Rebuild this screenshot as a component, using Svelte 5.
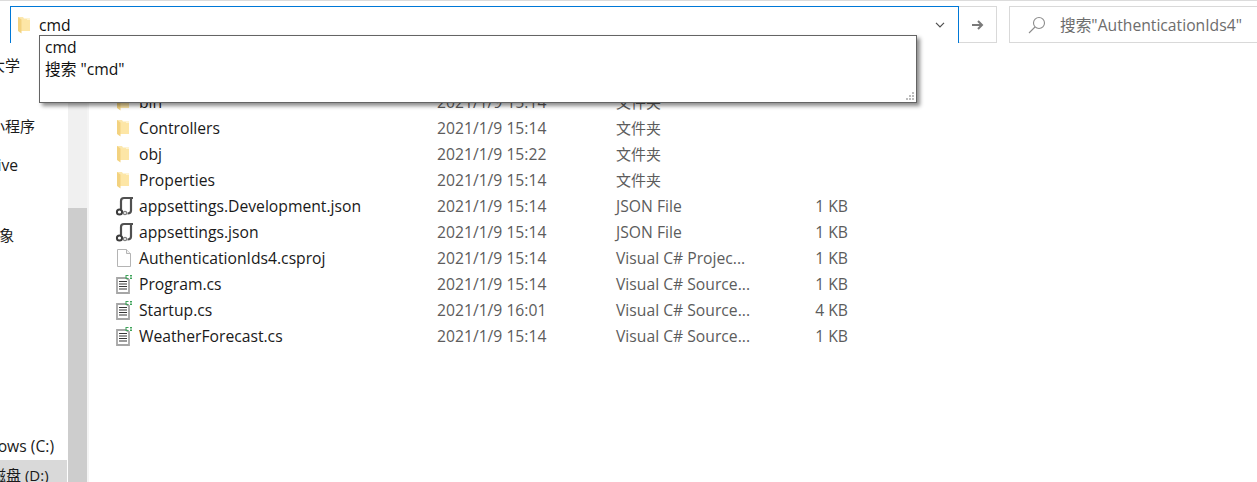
<script>
  const navItems = [
    { label: '北京大学', top: 11, left: -40, cn: true },
    { label: '微信小程序', top: 39, left: -40, cn: true },
    { label: 'OneDrive', top: 17, left: -51, cn: false },
    { label: '3D 对象', top: 48, left: -39, cn: true },
    { label: 'Windows (C:)', top: 189, left: -40, cn: false },
  ]

  const files = [
    { name: 'bin', date: '2021/1/9 15:14', type: '文件夹', size: '', icon: 'folder' },
    { name: 'Controllers', date: '2021/1/9 15:14', type: '文件夹', size: '', icon: 'folder' },
    { name: 'obj', date: '2021/1/9 15:22', type: '文件夹', size: '', icon: 'folder' },
    { name: 'Properties', date: '2021/1/9 15:14', type: '文件夹', size: '', icon: 'folder' },
    { name: 'appsettings.Development.json', date: '2021/1/9 15:14', type: 'JSON File', size: '1 KB', icon: 'json' },
    { name: 'appsettings.json', date: '2021/1/9 15:14', type: 'JSON File', size: '1 KB', icon: 'json' },
    { name: 'AuthenticationIds4.csproj', date: '2021/1/9 15:14', type: 'Visual C# Projec...', size: '1 KB', icon: 'file' },
    { name: 'Program.cs', date: '2021/1/9 15:14', type: 'Visual C# Source...', size: '1 KB', icon: 'cs' },
    { name: 'Startup.cs', date: '2021/1/9 16:01', type: 'Visual C# Source...', size: '4 KB', icon: 'cs' },
    { name: 'WeatherForecast.cs', date: '2021/1/9 15:14', type: 'Visual C# Source...', size: '1 KB', icon: 'cs' },
  ]
</script>

{#snippet folderIcon()}
  <svg class="icon" viewBox="-1 0 14 18" width="14" height="18">
    <path d="M1 1h5l1 1.500h6V15H1z" fill="#fbe7ae"/>
    <path d="M4.500 3.500H13V15H4.500z" fill="#fde6a6"/>
    <path d="M1 1l3.500 2.500V17.500L1 15z" fill="#f3d27f"/>
    <path d="M10 2.500h3V4h-3z" fill="#fff4d2"/>
  </svg>
{/snippet}

{#snippet jsonIcon()}
  <svg class="icon" viewBox="0 0 20 20" width="20" height="20">
    <path d="M6 13V5C6 3 7 2 9 2H18" fill="none" stroke="#505050" stroke-width="2.200"/>
    <path d="M16 3V14.500C16 16.500 15 17.500 12.500 17.500" fill="none" stroke="#505050" stroke-width="2.200"/>
    <circle cx="4.500" cy="16" r="2.600" fill="#fff" stroke="#3c3c3c" stroke-width="2"/>
    <circle cx="10" cy="17" r="1.600" fill="#fff" stroke="#808080" stroke-width="1.300"/>
  </svg>
{/snippet}

{#snippet fileIcon()}
  <svg class="icon" viewBox="-1 0 16 18" width="16" height="18">
    <path d="M1.500 .5h9l4 4v13h-13z" fill="#fff" stroke="#b4b4b4"/>
    <path d="M10.500 .5v4h4" fill="#f2f2f2" stroke="#b4b4b4"/>
  </svg>
{/snippet}

{#snippet csIcon()}
  <svg class="icon" viewBox="0 0 18 20" width="18" height="20">
    <path d="M2 4h9l3 2v13H2z" fill="#fff" stroke="#a6a6a6" stroke-width="1.800"/>
    <path d="M4 7.500h8M4 10h8M4 12.500h8M4 15h8" stroke="#383838" stroke-width="1.200"/>
    <path d="M10.500 1h3v1h-2v2h2v1h-3zM15 1h2v1.500h-2zM15 3.500h2V5h-2z" fill="#3fa35a"/>
  </svg>
{/snippet}

<div class="window">
  <div class="topline"></div>

  <div class="toolbar">
    <div class="address">
      {@render folderIcon()}
      <span class="address-text">cmd</span>
      <svg class="chevron" viewBox="0 0 10 6" width="10" height="6">
        <path d="M1 .8l4 4 4-4" fill="none" stroke="#4f4f4f" stroke-width="1.200"/>
      </svg>
    </div>
    <div class="go">
      <svg viewBox="0 0 12 12" width="12" height="12">
        <path d="M0 6h10M6 2l4 4-4 4" fill="none" stroke="#7a7a7a" stroke-width="2"/>
      </svg>
    </div>
    <div class="search">
      <svg viewBox="0 0 18 18" width="18" height="18">
        <circle cx="11" cy="7" r="5.500" fill="none" stroke="#8c8c8c" stroke-width="1.100"/>
        <path d="M7 11l-6 6" stroke="#8c8c8c" stroke-width="1.100"/>
      </svg>
      <span>搜索"AuthenticationIds4"</span>
    </div>
  </div>

  <div class="body">
    <nav class="sidebar">
      {#each navItems as item}
        <div class="nav-item" class:cn={item.cn} style="margin-top: {item.top}px; margin-left: {item.left}px">{item.label}</div>
      {/each}
      <div class="nav-item selected cn"><span>本地磁盘 (D:)</span></div>
    </nav>
    <div class="scrollbar"><div class="thumb"></div></div>
    <div class="divider"></div>

    <div class="list">
      {#each files as f}
        <div class="row">
          <span class="icon-cell">
            {#if f.icon === 'folder'}
              {@render folderIcon()}
            {:else if f.icon === 'json'}
              {@render jsonIcon()}
            {:else if f.icon === 'file'}
              {@render fileIcon()}
            {:else}
              {@render csIcon()}
            {/if}
          </span>
          <span class="name">{f.name}</span>
          <span class="date">{f.date}</span>
          <span class="type" class:cn={f.icon === 'folder'}>{f.type}</span>
          <span class="size">{f.size}</span>
        </div>
      {/each}
    </div>
  </div>

  <div class="dropdown">
    <div class="suggest">cmd</div>
    <div class="suggest">搜索 "cmd"</div>
    <svg class="grip" viewBox="0 0 9 9" width="9" height="9">
      <path d="M6 0h2v2H6zM3 3h2v2H3zM6 3h2v2H6zM0 6h2v2H0zM3 6h2v2H3zM6 6h2v2H6z" fill="#bdbdbd"/>
    </svg>
  </div>
</div>

<style>
  :global(body) {
    margin: 0;
    background: #fff;
  }

  .window {
    position: relative;
    width: 1257px;
    height: 482px;
    overflow: hidden;
    background: #fff;
    color: #1a1a1a;
    font-family: "Open Sans", "Noto Sans CJK SC", sans-serif;
    font-size: 15.7px;
  }

  .cn {
    font-size: 15px;
  }

  .topline {
    height: 1px;
    background: #dcdcdc;
  }

  .toolbar {
    display: flex;
    height: 37px;
    margin-top: 5px;
    padding-left: 10px;
  }

  .address {
    width: 949px;
    box-sizing: border-box;
    display: flex;
    align-items: center;
    border: 1px solid #0078d7;
    border-bottom: 0;
    padding-left: 5px;
  }

  .address-text {
    margin-left: 9px;
    flex: 1;
    color: #111;
  }

  .chevron {
    margin-right: 13px;
  }

  .go {
    width: 38px;
    box-sizing: border-box;
    display: flex;
    align-items: center;
    justify-content: center;
    border: 1px solid #d9d9d9;
    border-left: 0;
  }

  .search {
    margin-left: 12px;
    flex: 1;
    display: flex;
    align-items: center;
    gap: 14px;
    border: 1px solid #d9d9d9;
    border-right: 0;
    padding-left: 18px;
    color: #6d6d6d;
  }

  .body {
    display: flex;
    height: 439px;
  }

  .sidebar {
    width: 68px;
    flex: none;
    overflow: hidden;
    display: flex;
    flex-direction: column;
  }

  .nav-item {
    height: 22px;
    line-height: 22px;
    white-space: nowrap;
    color: #1a1a1a;
  }

  .nav-item.selected {
    margin-top: 3px;
    height: 22px;
    line-height: 30px;
    background: #d9d9d9;
    width: 67px;
    overflow: hidden;
    flex: none;
  }

  .nav-item.selected span {
    margin-left: -39px;
  }

  .scrollbar {
    width: 19px;
    flex: none;
    background: #f0f0f0;
    padding-top: 165px;
    box-sizing: border-box;
  }

  .thumb {
    height: 100%;
    background: #cdcdcd;
  }

  .divider {
    width: 2px;
    flex: none;
    background: #f4f4f4;
  }

  .list {
    flex: 1;
    padding-left: 25px;
    padding-top: 46px;
  }

  .row {
    display: flex;
    align-items: center;
    height: 26px;
  }

  .icon-cell {
    width: 24px;
    margin-left: 1px;
    height: 20px;
    display: flex;
    align-items: center;
    justify-content: flex-start;
    flex: none;
  }

  .name {
    width: 298px;
  }

  .date {
    width: 179px;
    color: #5c5c5c;
  }

  .type {
    width: 150px;
    color: #5c5c5c;
  }

  .type.cn {
    margin-top: -2px;
  }

  .size {
    width: 82px;
    text-align: right;
    color: #5c5c5c;
  }

  .dropdown {
    position: absolute;
    left: 39px;
    top: 35px;
    width: 878px;
    height: 68px;
    box-sizing: border-box;
    background: #fff;
    border: 1px solid #646464;
    box-shadow: 3px 3px 4px rgba(0, 0, 0, 0.45);
    padding: 0 5px;
  }

  .suggest {
    height: 22px;
    line-height: 22px;
    color: #111;
  }

  .grip {
    position: absolute;
    right: 1px;
    bottom: 1px;
  }
</style>
